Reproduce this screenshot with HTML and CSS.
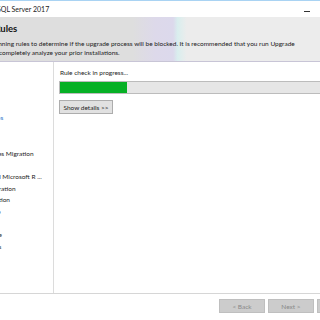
FILE: index.html
```html
<!DOCTYPE html>
<html lang="en">
<head>
    <meta charset="UTF-8">
    <title>SQL Server 2017</title>
    <link rel="stylesheet" href="styles.css">
</head>
<body>
    <div class="window">
        <div class="titlebar">
            <span class="title">SQL Server 2017</span>
            <div class="controls">
                <span class="ctl min"></span>
                <span class="ctl"></span>
                <span class="ctl"></span>
            </div>
        </div>

        <div class="banner">
            <h1>Upgrade Rules</h1>
            <p>Setup is running rules to determine if the upgrade process will be blocked. It is recommended that you run Upgrade<br>
               Advisor to completely analyze your prior installations.</p>
        </div>

        <div class="main">
            <ul class="steps">
                <li>Product Key</li>
                <li>License Terms</li>
                <li>Global Rules</li>
                <li>Product Updates</li>
                <li class="current">Install Setup Files</li>
                <li>Upgrade Rules</li>
                <li>Select Features</li>
                <li>Reporting Services Migration</li>
                <li>Instance</li>
                <li>Consent to install Microsoft R ...</li>
                <li>Instance Configuration</li>
                <li>Server Configuration</li>
                <li>Full-text Upgrade</li>
                <li>Feature Rules</li>
                <li>Ready to Upgrade</li>
                <li>Upgrade Progress</li>
            </ul>

            <div class="content">
                <div class="status">Rule check in progress...</div>
                <div class="progress"><div class="bar" style="width: 67px"></div></div>
                <button class="details">Show details &gt;&gt;</button>
            </div>
        </div>

        <div class="footer">
            <button class="btn" disabled>&lt; Back</button>
            <button class="btn" disabled>Next &gt;</button>
            <button class="btn">Cancel</button>
        </div>
    </div>
</body>
</html>
```

FILE: styles.css
```css
* {
    box-sizing: border-box;
}

body {
    margin: 0;
    background: #fff;
    overflow: hidden;
    font-family: "Segoe UI", Lato, "Noto Sans", sans-serif;
    font-size: 6.5px;
    color: #1e1e1e;
}

.window {
    width: 452px;
    height: 320px;
    margin-left: -80px;
    display: flex;
    flex-direction: column;
    background: #fff;
}

/* title bar */
.titlebar {
    height: 17px;
    border-top: 1px solid #a9d3f3;
    display: flex;
    align-items: center;
    justify-content: space-between;
    padding-left: 77px;
}

.title {
    font-size: 7px;
    color: #222;
}

.controls {
    display: flex;
    height: 100%;
}

.ctl {
    width: 26px;
    height: 100%;
    display: flex;
    align-items: center;
    justify-content: center;
}

.min::after {
    content: "";
    width: 6px;
    height: 1px;
    margin-top: 5px;
    background: #333;
}

/* header band */
.banner {
    height: 45px;
    padding: 6px 0 0 36px;
    border-bottom: 1px solid #c8c5d6;
    background: linear-gradient(90deg, #dedede 0%, #dedede 47%, #ddd9ea 52%, #dcd9ec 56%, #d9eeee 57%, #ececec 59%, #ececec 100%);
}

h1 {
    margin: 0;
    font-size: 9.5px;
    line-height: 12px;
    font-weight: bold;
    color: #111;
}

.banner p {
    margin: 5px 0 0 12px;
    line-height: 8.5px;
    color: #222;
}

/* body */
.main {
    flex: 1;
    display: flex;
}

.steps {
    width: 134px;
    margin: 0;
    padding: 3.6px 0 0 31px;
    list-style: none;
    border-right: 1px solid #dcdcdc;
    white-space: nowrap;
    overflow: hidden;
}

.steps li {
    line-height: 11.7px;
}

.steps .current {
    color: #2a6fc9;
    letter-spacing: 0.15px;
}

.content {
    flex: 1;
    padding: 5px 0 0 6px;
}

.status {
    line-height: 12px;
    margin-bottom: 2px;
}

.progress {
    height: 13px;
    margin-left: -1px;
    border: 1px solid #bcbcbc;
    background: #e6e6e6;
}

.bar {
    height: 100%;
    background: #06b025;
}

.details {
    margin: 6px 0 0 -1px;
    width: 54px;
    height: 14px;
    padding: 0;
    border: 1px solid #adadad;
    background: #e1e1e1;
    font: inherit;
    color: #1e1e1e;
}

/* footer */
.footer {
    height: 27px;
    border-top: 1px solid #d6d6d6;
    display: flex;
    justify-content: flex-end;
    gap: 3px;
    padding: 5px 9px 0 0;
}

.btn {
    width: 46px;
    height: 14px;
    padding: 0;
    border: 1px solid #bfbfbf;
    background: #cccccc;
    font: inherit;
    color: #8a8a8a;
}
```
